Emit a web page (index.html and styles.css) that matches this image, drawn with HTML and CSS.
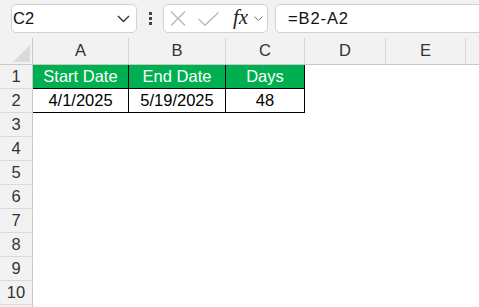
FILE: index.html
```html
<html>
<head>
  <link rel="stylesheet" href="styles.css">
</head>
<body>
  <div class="toolbar">
    <div class="name-box">
      <span class="name-box_text">C2</span>
      <svg class="chevron" width="13" height="8" viewBox="0 0 13 8"><path d="M1 1 L6.5 6.5 L12 1" fill="none" stroke="#333" stroke-width="1.4"/></svg>
    </div>
    <div class="dots"><i></i><i></i><i></i></div>
    <div class="fx-box">
      <svg class="fx-box_cancel" width="16" height="15" viewBox="0 0 16 15"><path d="M1 0.5 L15 14.5 M15 0.5 L1 14.5" fill="none" stroke="#b4b4b4" stroke-width="1.2"/></svg>
      <svg class="fx-box_enter" width="21" height="14" viewBox="0 0 21 14"><path d="M0.5 7 L7 13.3 L20.5 0.5" fill="none" stroke="#b4b4b4" stroke-width="1.2"/></svg>
      <span class="fx-box_label">fx</span>
      <svg class="chevron-small" width="9" height="5" viewBox="0 0 9 5"><path d="M0.5 0.5 L4.5 4.5 L8.5 0.5" fill="none" stroke="#777" stroke-width="1"/></svg>
    </div>
    <div class="formula">=B2-A2</div>
  </div>

  <div class="sheet">
    <div class="row col-head">
      <div class="corner"><div class="corner_tri"></div></div>
      <div class="ch">A</div>
      <div class="ch">B</div>
      <div class="ch">C</div>
      <div class="ch">D</div>
      <div class="ch">E</div>
      <div class="ch ch-last"></div>
    </div>
    <div class="row">
      <div class="rh">1</div>
      <div class="cell cell-head">Start Date</div>
      <div class="cell cell-head">End Date</div>
      <div class="cell cell-head">Days</div>
    </div>
    <div class="row">
      <div class="rh">2</div>
      <div class="cell cell-data">4/1/2025</div>
      <div class="cell cell-data">5/19/2025</div>
      <div class="cell cell-data">48</div>
    </div>
    <div class="row"><div class="rh">3</div></div>
    <div class="row"><div class="rh">4</div></div>
    <div class="row"><div class="rh">5</div></div>
    <div class="row"><div class="rh">6</div></div>
    <div class="row"><div class="rh">7</div></div>
    <div class="row"><div class="rh">8</div></div>
    <div class="row"><div class="rh">9</div></div>
    <div class="row"><div class="rh">10</div></div>
    <div class="row"><div class="rh"></div></div>
  </div>
</body>
</html>
```

FILE: styles.css
```css
body {
  margin: 0;
  background: white;
  font-family: "Liberation Sans", Arial, sans-serif;
  overflow: hidden;
}
.toolbar {
  height: 38px;
  box-sizing: border-box;
  padding-top: 4px;
  background: #f2f2f2;
  display: flex;
  align-items: flex-start;
}
.name-box {
  margin-left: 11px;
  width: 126px;
  height: 29px;
  box-sizing: border-box;
  border: 1px solid #d2d2d2;
  border-radius: 5px;
  background: white;
  display: flex;
  align-items: center;
  justify-content: space-between;
  padding: 0 6px 0 1px;
}
.name-box_text {
  font-size: 16.5px;
  color: #111;
}
.dots {
  width: 26px;
  height: 29px;
  display: flex;
  flex-direction: column;
  align-items: center;
  justify-content: center;
  gap: 2px;
}
.dots > i {
  display: block;
  width: 3px;
  height: 3px;
  background: #444;
}
.fx-box {
  width: 105px;
  height: 29px;
  box-sizing: border-box;
  border: 1px solid #d2d2d2;
  border-radius: 5px;
  background: white;
  display: flex;
  align-items: center;
  padding-left: 6px;
}
.fx-box_enter {
  margin-left: 12px;
}
.fx-box_label {
  margin-left: 14px;
  font-family: "Liberation Serif", serif;
  font-style: italic;
  font-size: 21px;
  color: #222;
  line-height: 1;
  padding-bottom: 2px;
}
.chevron-small {
  margin-left: 6px;
}
.formula {
  margin-left: 7px;
  margin-right: -10px;
  flex: 1;
  height: 29px;
  box-sizing: border-box;
  border: 1px solid #d2d2d2;
  border-radius: 5px;
  background: white;
  display: flex;
  align-items: center;
  padding-left: 12px;
  font-size: 16.5px;
  letter-spacing: 0.9px;
  color: #111;
}
.row {
  display: grid;
  grid-template-columns: 33px 96px 97px 79px 81px 80px 1fr;
  height: 24px;
}
.col-head {
  height: 27px;
  background: #f2f2f2;
  border-bottom: 1px solid #c8c8c8;
  box-sizing: border-box;
}
.corner {
  border-right: 1px solid #c8c8c8;
  display: flex;
  justify-content: flex-end;
  align-items: flex-end;
  padding: 0 2px 2px 0;
}
.corner_tri {
  width: 17px;
  height: 17px;
  background: #dadada;
  clip-path: polygon(100% 0, 100% 100%, 0 100%);
}
.ch {
  border-right: 1px solid #d6d6d6;
  display: flex;
  justify-content: center;
  align-items: flex-end;
  padding-bottom: 4px;
  font-size: 16.5px;
  color: #333;
}
.ch-last {
  border-right: none;
}
.rh {
  background: #f2f2f2;
  border-right: 1px solid #c8c8c8;
  border-bottom: 1px solid #dadada;
  display: flex;
  justify-content: center;
  align-items: center;
  font-size: 16.5px;
  color: #333;
}
.cell {
  border-right: 1px solid black;
  border-bottom: 1px solid black;
  display: flex;
  justify-content: center;
  align-items: center;
  font-size: 16.5px;
}
.cell-head {
  background: #00b050;
  color: white;
}
.cell-data {
  color: black;
}
```
